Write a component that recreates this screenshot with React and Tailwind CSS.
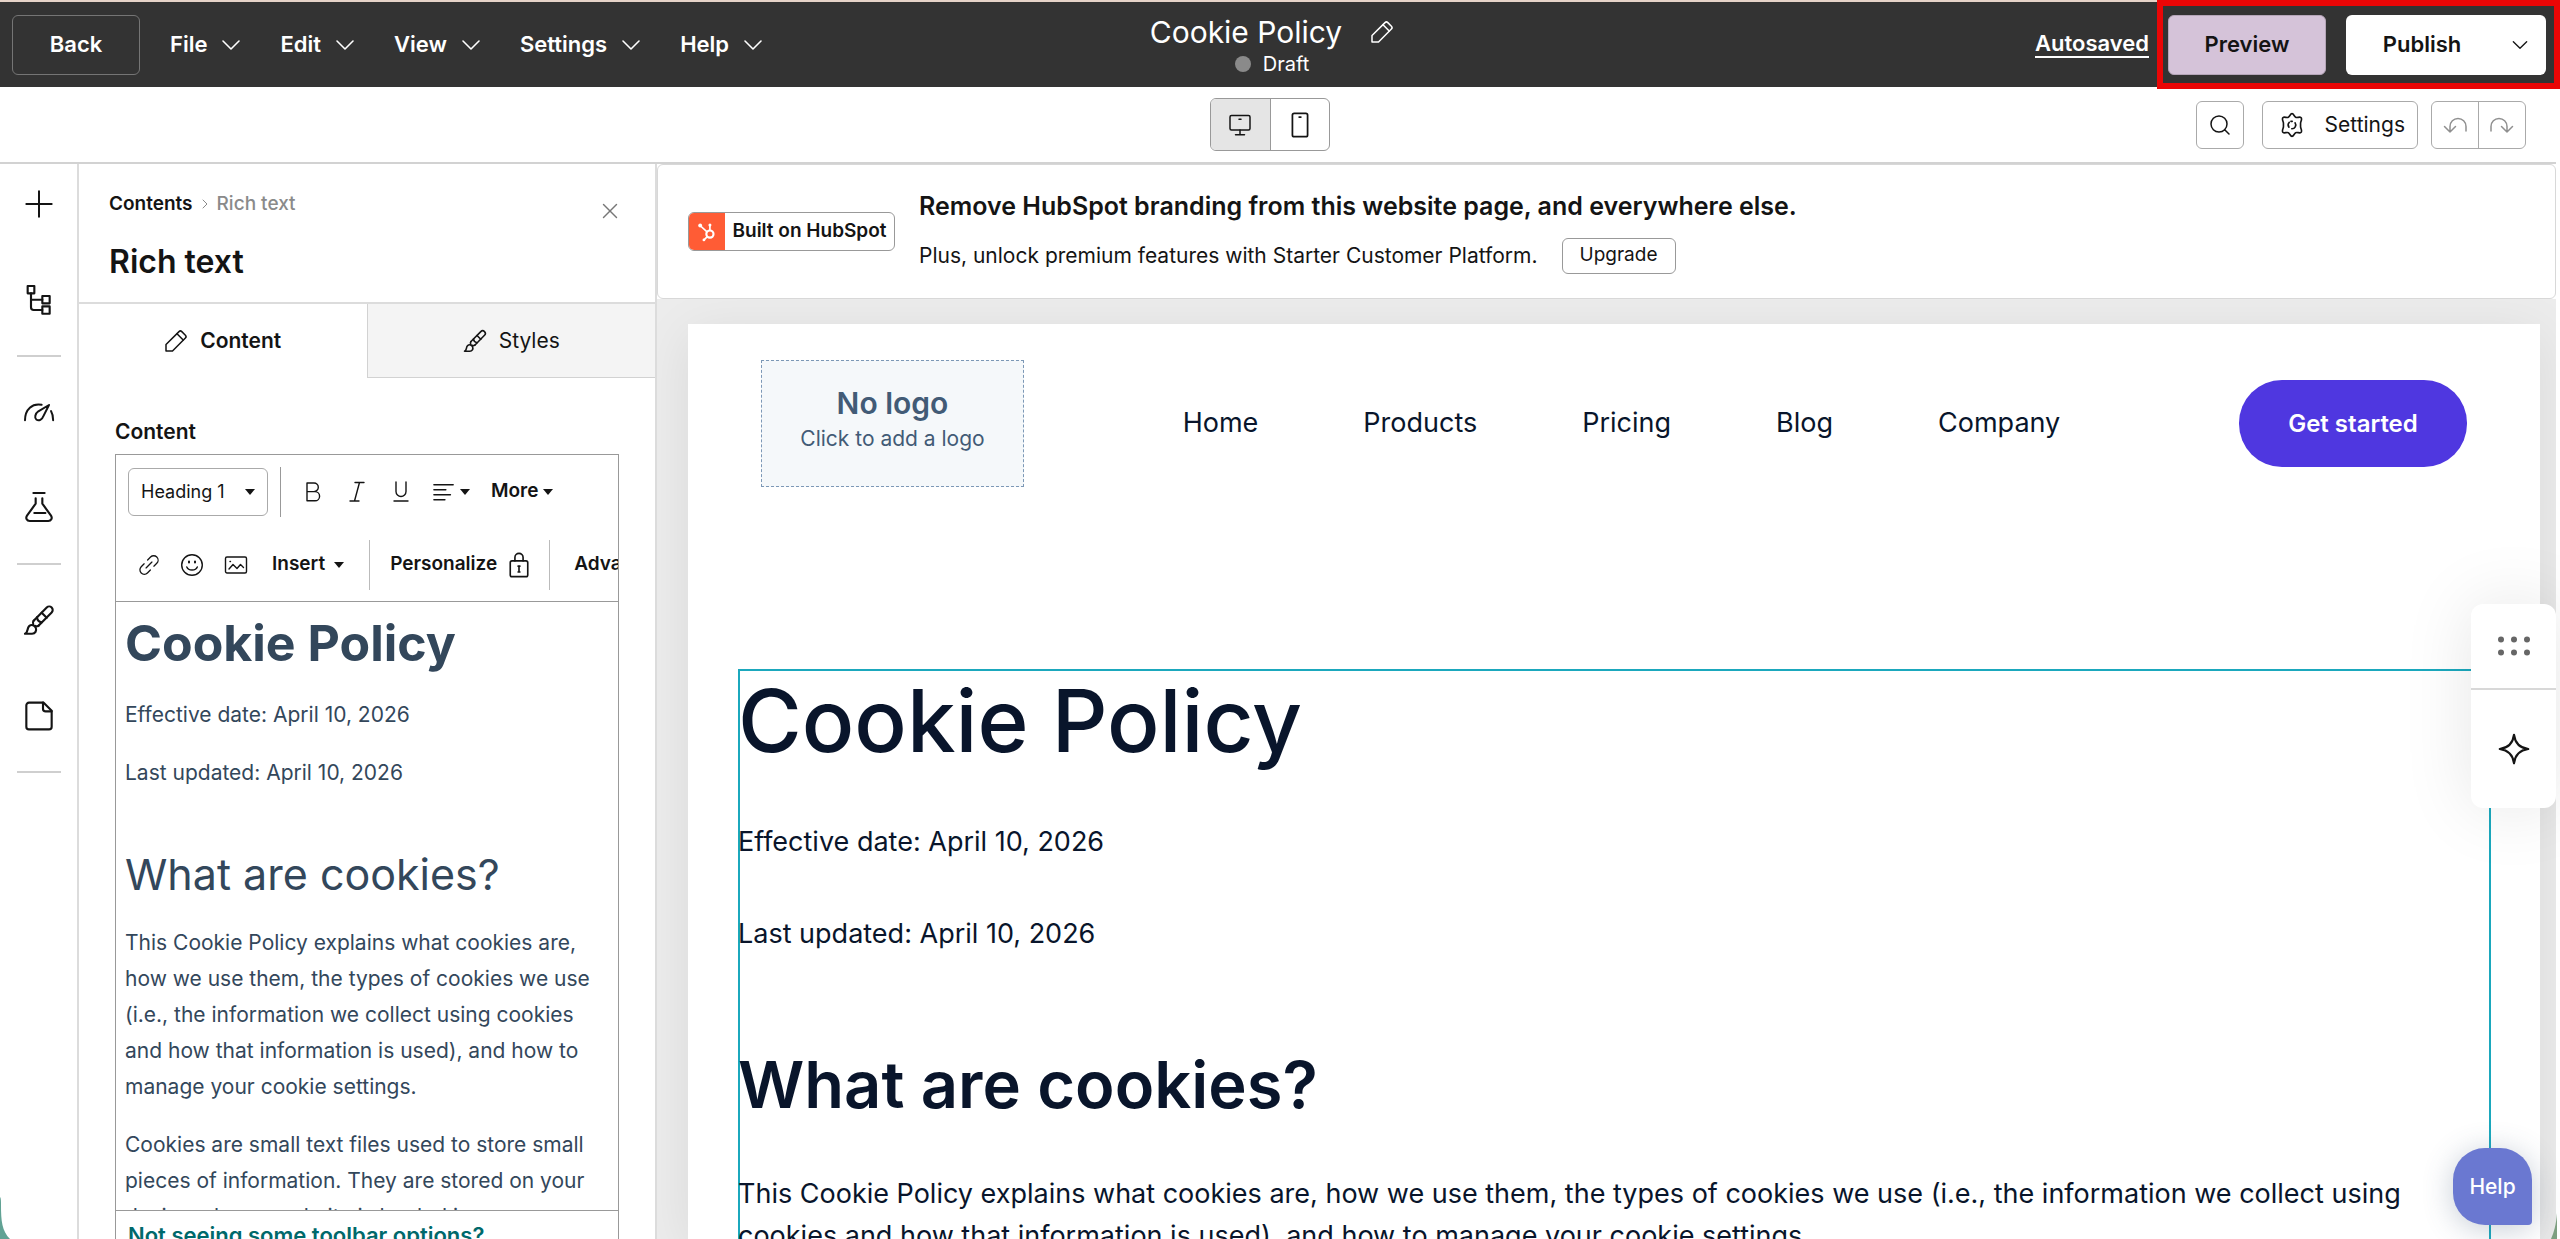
import { useState } from 'react';
import { ChevronRight, X, Search } from 'lucide-react';

const MENUS = ['File', 'Edit', 'View', 'Settings', 'Help'];
const NAV = ['Home', 'Products', 'Pricing', 'Blog', 'Company'];

function Icon({ className, box = 24, width = 1.5, children }) {
  return (
    <svg viewBox={`0 0 ${box} ${box}`} className={className} fill="none" stroke="currentColor"
         strokeWidth={width} strokeLinecap="round" strokeLinejoin="round" aria-hidden="true">
      {children}
    </svg>
  );
}

function Chevron({ className }) {
  return <Icon className={className} width={1.6}><path d="M4 8l8 8 8-8" /></Icon>;
}

function Caret() {
  return (
    <svg viewBox="0 0 12 8" className="w-3 h-2 shrink-0" fill="currentColor" aria-hidden="true">
      <path d="M1 1h10L6 7z" />
    </svg>
  );
}

function PencilIcon({ className }) {
  return (
    <Icon className={className}>
      <path d="M2 22v-6.5L15 2.6a2 2 0 0 1 2.800 0l3.600 3.600a2 2 0 0 1 0 2.800L8.500 22z" />
      <path d="M13 4.800 19.200 11" />
    </Icon>
  );
}

function BrushIcon({ className }) {
  return (
    <Icon className={className} width={1.6}>
      <path d="M8 12.500 17.800 2.600a2.600 2.600 0 0 1 3.700 3.700L11.800 16.200" />
      <path d="M8 12.500c-.8 1-.8 1.800-.3 2.700M11.800 16.200c-1 .7-1.700.6-2.500.2M14 6.500l3.800 3.800M10.500 10c.2 2 1.500 3.300 3.500 3.700" />
      <path d="M1.500 22.300h5.300c2.400 0 3.600-2.200 2.800-4.500-.9-2-3.300-2.700-5-1.200-1.900 1.700-.4 4.600-3.100 5.700z" />
    </Icon>
  );
}

function TopBar() {
  return (
    <header className="relative flex items-center h-[87px] bg-[#333333] border-t-2 border-[#e6d3c8] pl-3 text-white">
      <div className="absolute inset-x-0 top-0 flex flex-col items-center pt-[10px] pr-4">
        <div className="flex items-center gap-7">
          <h1 className="text-[30px] leading-10">Cookie Policy</h1>
          <button aria-label="Edit title">
            <PencilIcon className="size-6" />
          </button>
        </div>
        <p className="flex items-center gap-3 text-xl leading-6">
          <span className="size-4 rounded-full bg-[#8a8a8a]" />
          Draft
        </p>
      </div>
      <button className="relative w-32 h-[60px] rounded-md border border-[#757575] text-[22px] font-semibold">Back</button>
      <nav className="relative flex items-center gap-[37px] pl-[30px]">
        {MENUS.map(m => (
          <button key={m} className="flex items-center gap-3 text-[22px] font-semibold">
            {m}
            <Chevron className="size-6" />
          </button>
        ))}
      </nav>
      <a href="#" className="relative ml-auto mr-2 border-b-2 border-white text-[22px] leading-[25px] font-semibold">Autosaved</a>
      <div className="relative self-start -mt-[2px] h-[89px] shrink-0 flex items-center gap-5 border-[6px] border-[#ea0606] pl-[5px] pr-2 z-10">
        <button className="w-[158px] h-[60px] rounded-md border border-[#b5a5b8] bg-[#d5c3d9] text-[#141414] text-[22px] font-semibold">Preview</button>
        <div className="flex w-[200px] h-[60px] rounded-md bg-white text-[#141414]">
          <button className="flex-1 pr-3 text-[22px] font-semibold">Publish</button>
          <button aria-label="Publish options" className="pr-4">
            <Chevron className="size-5" />
          </button>
        </div>
      </div>
    </header>
  );
}

function ToolBar() {
  return (
    <div className="relative flex items-center justify-end gap-[18px] h-[77px] mr-1 pr-[30px] border-b-2 border-[#d2d2d2] text-[#141414]">
      <div className="absolute inset-x-0 top-[11px] flex justify-center pr-4">
        <div className="flex w-[120px] h-[53px] rounded-md border border-[#999] overflow-hidden">
          <button aria-label="Desktop" className="flex-1 flex items-center justify-center bg-[#e5e5e5] border-r border-[#999]">
            <Icon className="size-6">
              <rect x="2" y="2.500" width="20" height="14.500" rx="1.500" />
              <path d="M12 17v4.500M7.500 21.700h9M11 6.200h2" />
            </Icon>
          </button>
          <button aria-label="Mobile" className="flex-1 flex items-center justify-center">
            <Icon className="size-7">
              <rect x="5.500" y="2" width="13" height="20" rx="1.500" />
              <path d="M11.300 5.200h1.400" />
            </Icon>
          </button>
        </div>
      </div>
      <button aria-label="Search" className="relative size-12 flex items-center justify-center rounded-md border border-[#aaa]">
        <Search size={24} strokeWidth={1.5} />
      </button>
      <button className="relative w-[156px] h-12 flex items-center justify-between pl-4 pr-3 rounded-md border border-[#aaa] text-[21px]">
        <Icon className="size-[26px] shrink-0">
          <path d="M12 1.500c1.600 0 2 2.700 3.400 3.400 1.400.7 3.600-.8 4.900.2 1.500 1.300-.4 3.700-.4 5.200v3.400c0 1.500 1.900 3.900.4 5.200-1.300 1-3.500-.5-4.900.2-1.400.7-1.800 3.400-3.400 3.400s-2-2.700-3.400-3.400c-1.400-.7-3.600.8-4.900-.2-1.500-1.300.4-3.700.4-5.200v-3.400c0-1.500-1.900-3.900-.4-5.200 1.300-1 3.500.5 4.900-.2C10 4.200 10.400 1.500 12 1.500z" />
          <path d="M14.800 10a3.500 3.500 0 0 1-3 5.500M9.200 14a3.500 3.500 0 0 1 .3-4.500M11 8.600h1.200" />
        </Icon>
        Settings
      </button>
      <div className="relative -ml-[5px] flex w-[95px] h-12 rounded-md border border-[#aaa] text-[#8f8f8f]">
        <button aria-label="Undo" className="flex-1 flex items-center justify-center border-r border-[#aaa]">
          <Icon className="size-6">
            <path d="M23 18v-4.500a8 8 0 0 0-16 0V19M1.500 13.500 7 19l5.500-5.500" />
          </Icon>
        </button>
        <button aria-label="Redo" className="flex-1 flex items-center justify-center">
          <Icon className="size-6">
            <path d="M1 18v-4.500a8 8 0 0 1 16 0V19M11.500 13.500 17 19l5.500-5.500" />
          </Icon>
        </button>
      </div>
    </div>
  );
}

function Rail() {
  return (
    <aside className="w-[79px] shrink-0 flex flex-col items-center border-r-2 border-[#dcdcdc] pt-6 text-[#141414]">
      <button aria-label="Add" className="h-8">
        <Icon className="size-8"><path d="M12 2.500v19M2.500 12h19" /></Icon>
      </button>
      <button aria-label="Contents" className="mt-16 h-8">
        <Icon className="size-8" width={1.6}>
          <rect x="3.500" y="1.500" width="5" height="5.500" />
          <rect x="14.500" y="9" width="5.500" height="5.500" />
          <rect x="14.500" y="16.800" width="5.500" height="5.500" />
          <path d="M6 7v10.500a2 2 0 0 0 2 2h6.500M6 11.800h8.500" />
        </Icon>
      </button>
      <hr className="mt-[39px] w-11 border-t-2 border-[#cfcfcf]" />
      <button aria-label="Optimize" className="mt-10 h-8">
        <Icon className="size-8">
          <path d="M1.500 17.500C1.500 9 7 4.500 14 5.800M21 10.500c1 1.700 1.600 4 1.600 7M19.500 6 11.500 10.700c-2.500 1.800-3 5-1.500 6.200 1.800 1.300 4.500 0 5.200-2.400z" />
        </Icon>
      </button>
      <button aria-label="Test" className="mt-[62px] h-8">
        <Icon className="size-8" width={1.6}>
          <path d="M7.800 1.500h8.400M9.500 5.500v4L3 18.500c-1.300 2 0 4 2 4h14c2 0 3.300-2 2-4L14.500 9.500v-4M8.500 16.500h8.300" />
        </Icon>
      </button>
      <hr className="mt-10 w-11 border-t-2 border-[#cfcfcf]" />
      <button aria-label="Theme" className="mt-[39px] h-8"><BrushIcon className="size-8" /></button>
      <button aria-label="Pages" className="mt-16 h-8">
        <Icon className="size-8" width={1.6}>
          <path d="M4.500 2h11l6 6v12a2 2 0 0 1-2 2h-15a2 2 0 0 1-2-2V4a2 2 0 0 1 2-2z" />
          <path d="M15 2v4.500a2 2 0 0 0 2 2h4.500" />
        </Icon>
      </button>
      <hr className="mt-[39px] w-11 border-t-2 border-[#cfcfcf]" />
    </aside>
  );
}

function EditorToolbar() {
  return (
    <div className="h-[147px] shrink-0 overflow-hidden border-b border-[#999] text-[#141414]">
      <div className="flex items-center h-[73px] pl-3">
        <div className="relative w-[140px] h-12">
          <select aria-label="Text style" defaultValue="h1"
                  className="w-full h-full appearance-none rounded-md border border-[#aaa] pl-3 text-lg">
            <option value="h1">Heading 1</option>
            <option value="h2">Heading 2</option>
          </select>
          <span className="pointer-events-none absolute right-3 top-5 h-2 flex"><Caret /></span>
        </div>
        <span className="ml-3 w-px h-[50px] bg-[#999]" />
        <div className="flex items-center gap-5 pl-5">
          <button aria-label="Bold">
            <Icon className="size-6" width={1.4}><path d="M6 3h7a4.300 4.300 0 0 1 0 8.600H6zM6 11.600h8a4.600 4.600 0 0 1 0 9.200H6z" /></Icon>
          </button>
          <button aria-label="Italic">
            <Icon className="size-6" width={1.4}><path d="M10 2.500h9M5 21h9M14.500 2.500 9.500 21" /></Icon>
          </button>
          <button aria-label="Underline">
            <Icon className="size-6" width={1.4}><path d="M7 2v9.500a5 5 0 0 0 10 0V2M5 21h14" /></Icon>
          </button>
          <button aria-label="Align" className="flex items-center gap-1">
            <Icon className="size-[22px]" width={1.6}><path d="M1 4h21M1 9.500h13M1 15h18M1 20.500h12" /></Icon>
            <Caret />
          </button>
          <button className="flex items-center gap-1 text-[19px] font-semibold">More <Caret /></button>
        </div>
      </div>
      <div className="flex items-center h-[73px] pl-[22px]">
        <button aria-label="Link" className="shrink-0">
          <Icon className="size-[22px]" width={1.4}>
            <path d="M10.500 6.500 13.700 3.300a4.500 4.500 0 0 1 6.800 6.800l-3.200 3.200M6.700 10.700l-3.200 3.200a4.500 4.500 0 0 0 6.800 6.800l3.200-3.200M8.800 15.200l6.400-6.400" />
          </Icon>
        </button>
        <button aria-label="Emoji" className="ml-5 shrink-0">
          <Icon className="size-6" width={1.4}>
            <circle cx="12" cy="12" r="10.300" />
            <path d="M6.800 14c1.500 4 9 4 10.500 0" />
            <path d="M9 8.500v1M15 8.500v1" strokeWidth={2} />
          </Icon>
        </button>
        <button aria-label="Image" className="ml-5 shrink-0">
          <Icon className="size-6" width={1.4}>
            <rect x="1.500" y="4" width="21" height="16" rx="1.500" />
            <path d="m5 16 4-4.500 4 4 3.500-4 3 3M6 8.500h.5" />
          </Icon>
        </button>
        <button className="ml-6 shrink-0 flex items-center gap-2 text-[19px] font-semibold">Insert <Caret /></button>
        <span className="ml-6 w-px h-[50px] shrink-0 bg-[#bbb]" />
        <button className="ml-5 shrink-0 flex items-center gap-2 text-[19px] font-semibold">
          Personalize
          <Icon className="size-7" width={1.4}>
            <rect x="4.500" y="8.500" width="15" height="13.500" rx="1.500" />
            <path d="M8.500 8.500V5.500a3.500 3.500 0 0 1 7 0v3" />
            <path d="M12 13v5M11.200 13h1.600M11.200 18h1.600" />
          </Icon>
        </button>
        <span className="ml-4 w-px h-[50px] shrink-0 bg-[#bbb]" />
        <button className="ml-6 shrink-0 text-[19px] font-semibold">Advanced</button>
      </div>
    </div>
  );
}

function SidePanel({ tab, setTab }) {
  return (
    <section className="w-[578px] shrink-0 flex flex-col border-r-2 border-[#dcdcdc] text-[#141414]">
      <div className="relative h-[140px] shrink-0 border-b-2 border-[#dcdcdc] px-[30px] pt-7">
        <p className="flex items-center gap-1 text-[19px] leading-6 font-medium">
          <a href="#" className="font-semibold">Contents</a>
          <ChevronRight size={16} strokeWidth={1.5} className="text-[#8a8a8a]" />
          <span className="text-[#8a8a8a]">Rich text</span>
        </p>
        <h2 className="mt-[26px] text-[32px] leading-10 font-semibold">Rich text</h2>
        <button aria-label="Close" className="absolute right-8 top-[34px]">
          <X size={26} strokeWidth={1.3} className="text-[#777]" />
        </button>
      </div>
      <div role="tablist" className="flex h-[74px] shrink-0 text-[21px]">
        <button role="tab" aria-selected={tab === 'content'} onClick={() => setTab('content')}
                className="flex-1 flex items-center justify-center gap-3 font-semibold">
          <PencilIcon className="size-6" /> Content
        </button>
        <button role="tab" aria-selected={tab === 'styles'} onClick={() => setTab('styles')}
                className="flex-1 flex items-center justify-center gap-3 bg-[#f4f4f4] border-l border-b border-[#d2d2d2]">
          <BrushIcon className="size-6" /> Styles
        </button>
      </div>
      <div className="flex-1 min-h-0 flex flex-col px-9 pt-10">
        <h3 className="text-[21px] leading-7 font-semibold">Content</h3>
        <div className="mt-2 flex-1 min-h-0 flex flex-col border border-b-0 border-[#999]">
          <EditorToolbar />
          <div className="flex-1 min-h-0 overflow-hidden border-b border-[#999] px-[9px] text-[21px] leading-9 text-[#33475b]">
            <h1 className="mt-[11px] text-[50px] leading-[60px] font-bold">Cookie Policy</h1>
            <p className="mt-6">Effective date: April 10, 2026</p>
            <p className="mt-[22px]">Last updated: April 10, 2026</p>
            <h2 className="mt-[58px] text-[43px] leading-[50px]">What are cookies?</h2>
            <p className="mt-[26px]">
              This Cookie Policy explains what cookies are,<br />
              how we use them, the types of cookies we use<br />
              (i.e., the information we collect using cookies<br />
              and how that information is used), and how to<br />
              manage your cookie settings.
            </p>
            <p className="mt-[22px]">
              Cookies are small text files used to store small<br />
              pieces of information. They are stored on your<br />
              device when a website is loaded in your browser.
            </p>
          </div>
          <p className="h-7 shrink-0 overflow-hidden px-3 pt-[10px] text-[22px] leading-7 font-semibold text-[#00696b]">
            Not seeing some toolbar options?
          </p>
        </div>
      </div>
    </section>
  );
}

function BrandingBanner() {
  return (
    <div className="flex items-center gap-6 h-[135px] shrink-0 rounded-md border border-[#d8d8d8] bg-white px-[30px] text-[#141414]">
      <div className="flex items-center w-[207px] h-[39px] shrink-0 rounded-md border border-[#999] overflow-hidden">
        <span className="flex items-center justify-center w-9 h-full bg-[#ff5c35]">
          <svg viewBox="0 0 24 24" className="size-5" fill="none" stroke="#fff" strokeWidth="2" aria-hidden="true">
            <circle cx="15.500" cy="14.500" r="4.300" strokeWidth="2.600" />
            <path d="M15.500 10V4.500M12 11.800 4 4.500M12.300 17.500 8.500 21.500" />
            <circle cx="15.500" cy="3.500" r="1.800" fill="#fff" stroke="none" />
            <circle cx="3.800" cy="4.200" r="2.300" fill="#fff" stroke="none" />
            <circle cx="8.300" cy="21.500" r="1.700" fill="#fff" stroke="none" />
          </svg>
        </span>
        <span className="flex-1 text-center whitespace-nowrap text-[19px] font-semibold">Built on HubSpot</span>
      </div>
      <div>
        <p className="text-[25px] leading-8 font-semibold">Remove HubSpot branding from this website page, and everywhere else.</p>
        <div className="mt-4 flex items-center gap-6 text-[21px]">
          Plus, unlock premium features with Starter Customer Platform.
          <button className="w-[114px] h-9 rounded-md border border-[#999] text-[19px]">Upgrade</button>
        </div>
      </div>
    </div>
  );
}

function SitePreview() {
  return (
    <div className="flex-1 min-h-0 overflow-hidden bg-[#ececec] pt-[25px] pl-[31px] pr-4">
      <div className="h-full bg-white shadow-[0_10px_50px_rgba(0,0,0,0.08)] text-[#09152b]">
        <div className="flex items-center justify-between pt-9 px-[73px] text-[27px]">
          <button className="w-[263px] h-[127px] flex flex-col items-center border border-dashed border-[#7c98b6] bg-[#f5f8fa] pt-[22px] text-[#425b76]">
            <span className="text-[30px] leading-10 font-semibold">No logo</span>
            <span className="text-[21px] leading-8">Click to add a logo</span>
          </button>
          <nav className="flex gap-[105px] pr-5">
            {NAV.map(n => <a key={n} href="#">{n}</a>)}
          </nav>
          <button className="w-[228px] h-[87px] rounded-[43px] bg-[#4f37e0] text-2xl font-semibold text-white">Get started</button>
        </div>
        {/* selected rich text module */}
        <div className="mt-[182px] ml-[50px] mr-[49px] h-full border-2 border-[#1ba8bd]">
          <div className="-ml-[2px] text-[27px] leading-[42px]">
            <h1 className="text-[87px] leading-[100px] font-medium">Cookie Policy</h1>
            <p className="mt-[50px]">Effective date: April 10, 2026</p>
            <p className="mt-[50px]">Last updated: April 10, 2026</p>
            <h2 className="mt-[90px] text-[65px] leading-[80px] font-semibold">What are cookies?</h2>
            <p className="mt-[48px] pr-16">
              This Cookie Policy explains what cookies are, how we use them, the types of cookies we use (i.e., the information we collect using
              cookies and how that information is used), and how to manage your cookie settings.
            </p>
          </div>
        </div>
      </div>
    </div>
  );
}

function FloatingTools() {
  return (
    <>
      <div className="absolute right-1 top-[604px] w-[85px] rounded-xl bg-white shadow-[0_0_70px_rgba(0,0,0,0.1)] text-[#141414]">
        <button aria-label="Move" className="w-full h-[86px] flex items-center justify-center border-b-2 border-[#d8d8d8]">
          <svg viewBox="0 0 34 20" className="w-[34px] h-5" fill="#666" aria-hidden="true">
            {[4, 17, 30].map(x => (
              <g key={x}>
                <circle cx={x} cy="3.500" r="3" />
                <circle cx={x} cy="16.500" r="3" />
              </g>
            ))}
          </svg>
        </button>
        <button aria-label="Assistant" className="w-full h-[118px] flex items-center justify-center">
          <Icon className="size-9" width={1.4}>
            <path d="M12 2.500c.7 5.500 4 8.800 9.500 9.500-5.500.7-8.800 4-9.500 9.500-.7-5.500-4-8.800-9.500-9.500 5.500-.7 8.800-4 9.500-9.500z" />
          </Icon>
        </button>
      </div>
      <button className="absolute right-7 top-[1148px] w-[79px] h-[77px] rounded-[32px] rounded-br-sm bg-[#6a78d1] text-[21px] font-medium text-white shadow-[0_4px_30px_rgba(66,91,118,0.3)]">
        Help
      </button>
    </>
  );
}

export default function App() {
  const [tab, setTab] = useState('content');

  return (
    <div className="relative h-screen flex flex-col overflow-hidden bg-white font-['Inter',sans-serif]">
      <TopBar />
      <ToolBar />
      <div className="flex-1 min-h-0 flex mr-1">
        <Rail />
        <SidePanel tab={tab} setTab={setTab} />
        <main className="flex-1 min-w-0 flex flex-col">
          <BrandingBanner />
          <SitePreview />
        </main>
      </div>
      <FloatingTools />
      {/* desktop showing behind the rounded window corners */}
      <svg viewBox="0 0 12 44" className="absolute left-0 bottom-0 w-3 h-11" aria-hidden="true">
        <path d="M0 2c1 1 1 4 1 8 0 16 1 26 9 34H0z" fill="#61a294" />
      </svg>
      <svg viewBox="0 0 12 44" className="absolute right-0 bottom-0 w-3 h-11" aria-hidden="true">
        <path d="M9 18c-1 12-3 19-6 26h6z" fill="#7d9f80" />
      </svg>
    </div>
  );
}
